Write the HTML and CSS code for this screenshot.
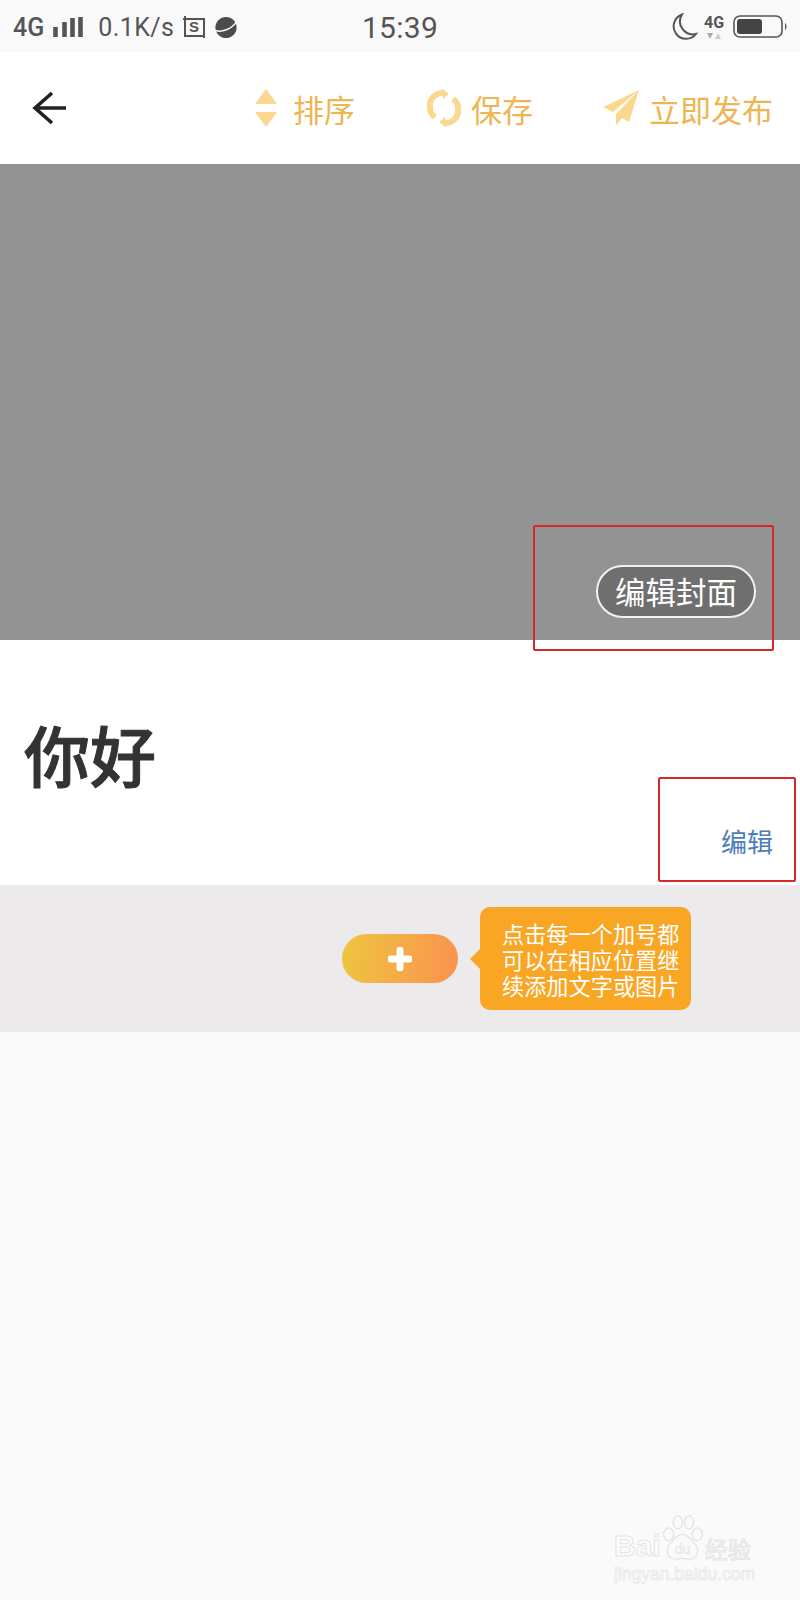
FILE: index.html
```html
<!DOCTYPE html>
<html lang="zh-CN">
<head>
    <meta charset="UTF-8">
    <meta name="viewport" content="width=device-width, initial-scale=1.0">
    <title>编辑</title>
    <link rel="stylesheet" href="styles.css">
</head>
<body>
    <div class="page">
        <div class="status">
            <div class="status-left">
                <span class="net">4G</span>
                <svg class="signal" width="30" height="20" viewBox="0 0 30 20"><path d="M2.5 10v10M11.5 5v15M19.5 1v19M27.5 0v20" stroke="#555" stroke-width="4.6" fill="none"/></svg>
                <span class="speed">0.1K/s</span>
                <svg class="s-icon" width="24" height="24" viewBox="0 0 24 24"><path d="M3 1v20h20M1 4h21v19" stroke="#555" stroke-width="2" fill="none"/><text x="12" y="17" class="s-letter">S</text></svg>
                <svg class="planet" width="24" height="23" viewBox="0 0 26 24"><circle cx="13" cy="12" r="11.5" fill="#4c4c4c"/><path d="M1 15C8 18 19 14 25 5" stroke="#f9f9f9" stroke-width="1.6" fill="none"/></svg>
            </div>
            <div class="time">15:39</div>
            <div class="status-right">
                <svg width="27" height="28" viewBox="0 0 27 28"><path d="M11 1.5A12.5 12.5 0 1 0 25 21 13 13 0 0 1 11 1.5Z" stroke="#555" stroke-width="2" fill="none"/></svg>
                <div class="net-small">
                    <span>4G</span>
                    <svg width="16" height="8" viewBox="0 0 16 8"><path d="M1 1h6L4 7Z" fill="#aaa"/><path d="M9 7h6L12 1Z" fill="#ccc"/></svg>
                </div>
                <svg width="54" height="24" viewBox="0 0 54 24"><rect x="1" y="1" width="48" height="21" rx="6" stroke="#555" stroke-width="1.6" fill="none"/><rect x="4" y="4" width="25" height="15" rx="3" fill="#444"/><path d="M52 8c2 1 2 6 0 7Z" fill="#555"/></svg>
            </div>
        </div>

        <div class="nav">
            <svg class="back" width="36" height="34" viewBox="0 0 36 34"><path d="M20 2 3 17l17 15M3 17h31" stroke="#222" stroke-width="3.6" fill="none"/></svg>
            <div class="actions">
                <div class="action action-sort">
                    <svg width="24" height="40" viewBox="0 0 24 40"><path d="M12 1 23 16H1ZM1 24h22L12 39Z" fill="#fbd88f"/></svg>
                    <span>排序</span>
                </div>
                <div class="action action-save">
                    <svg width="36" height="40" viewBox="0 0 36 40"><path d="M19 5C9 4 3 11 4 20c0 4 2 7 5 9M17 35c10 1 16-6 15-15 0-4-2-7-5-9" stroke="#fbd88f" stroke-width="6" fill="none"/><path d="M16 1l7 5-6 5ZM20 39l-7-5 6-5Z" fill="#fbd88f"/></svg>
                    <span>保存</span>
                </div>
                <div class="action action-publish">
                    <svg width="37" height="36" viewBox="0 0 37 36"><path d="M36 0 0 17l10 5ZM36 0 13 24v11l6-7 7 4Z" fill="#fbd88f"/></svg>
                    <span>立即发布</span>
                </div>
            </div>
        </div>

        <div class="cover">
            <div class="cover-btn">编辑封面</div>
        </div>

        <div class="title-box">
            <h1>你好</h1>
            <div class="edit">编辑</div>
        </div>

        <div class="add-row">
            <div class="add-btn">
                <svg width="24" height="24" viewBox="0 0 24 24"><path d="M12 3v18M3 12h18" stroke="#fff" stroke-width="7" stroke-linecap="round"/></svg>
            </div>
            <div class="tip">点击每一个加号都<br>可以在相应位置继<br>续添加文字或图片</div>
        </div>

        <div class="rest"></div>

        <div class="mark mark-cover"></div>
        <div class="mark mark-edit"></div>

        <div class="watermark">
            <div class="wm-top">
                <span class="wm-bai">Bai</span>
                <svg class="wm-paw" width="41" height="46" viewBox="0 0 44 50"><g fill="none" stroke="#e6e4e4" stroke-width="1.5"><ellipse cx="7" cy="21" rx="5.5" ry="7"/><ellipse cx="17" cy="8" rx="5" ry="7"/><ellipse cx="29" cy="8" rx="5" ry="7"/><ellipse cx="38" cy="21" rx="5.5" ry="7"/><path d="M22 21c7 0 10 7 14 11 5 6 2 16-6 16-3 0-5-1-8-1s-5 1-8 1c-8 0-11-10-6-16 4-4 7-11 14-11Z"/></g><text x="22" y="42" class="wm-du">du</text></svg>
                <span class="wm-cn">经验</span>
            </div>
            <div class="wm-url">jingyan.baidu.com</div>
        </div>
    </div>
</body>
</html>
```

FILE: styles.css
```css
*{
    margin: 0;
    padding: 0;
    box-sizing: border-box;
}
body{
    background-color: #fbfafa;
    font-family: "Noto Sans CJK SC", "Noto Sans", sans-serif;
}
.page{
    width: 800px;
    height: 1600px;
    position: relative;
    overflow: hidden;
    display: flex;
    flex-direction: column;
}

/* status bar */
.status{
    height: 52px;
    padding: 2px 13px 0;
    background-color: #f9f9f9;
    display: grid;
    grid-template-columns: 1fr auto 1fr;
    align-items: center;
    color: #555;
    font-family: Roboto, "Liberation Sans", sans-serif;
}
.status-left{
    display: flex;
    align-items: center;
}
.net{
    font-size: 25px;
    font-weight: 500;
    margin-right: 9px;
}
.speed{
    font-size: 25px;
    margin: 0 8px 0 15px;
    letter-spacing: 0.4px;
}
.s-icon{
    margin-right: 8px;
}
.s-letter{
    font-size: 15px;
    font-weight: 700;
    fill: #555;
    text-anchor: middle;
    font-family: "Liberation Sans", sans-serif;
}
.time{
    font-size: 30px;
    letter-spacing: 0.3px;
}
.status-right{
    display: flex;
    align-items: center;
    justify-content: flex-end;
}
.net-small{
    width: 24px;
    margin: 0 7px 0 4px;
    display: flex;
    flex-direction: column;
    align-items: center;
    font-size: 16px;
    font-weight: 700;
    line-height: 17px;
}
.net-small svg{
    display: block;
    margin-top: 1px;
}

/* top nav */
.nav{
    height: 112px;
    background-color: #fff;
    padding: 0 27px 0 32px;
    display: flex;
    align-items: center;
    justify-content: space-between;
}
.actions{
    display: flex;
    align-items: center;
    color: #eeb552;
    font-size: 31px;
}
.action{
    display: flex;
    align-items: center;
}
.action-sort{
    gap: 15px;
    margin-right: 71px;
}
.action-save{
    gap: 9px;
    margin-right: 70px;
}
.action-publish{
    gap: 9px;
}

/* cover */
.cover{
    height: 476px;
    background-color: #939393;
    display: flex;
    align-items: flex-end;
    justify-content: flex-end;
    padding: 0 44px 22px 0;
}
.cover-btn{
    width: 160px;
    height: 53px;
    border: 2px solid #f2f2f2;
    border-radius: 27px;
    background-color: #6f6f6f;
    color: #fff;
    font-size: 30.5px;
    line-height: 49px;
    text-align: center;
}

/* title */
.title-box{
    height: 245px;
    background-color: #fff;
    padding: 68px 27px 0 24px;
    display: flex;
    flex-direction: column;
}
.title-box h1{
    font-size: 66px;
    font-weight: 500;
    line-height: 90px;
    color: #333;
    -webkit-text-stroke: 1px #333;
}
.edit{
    margin-top: 24px;
    align-self: flex-end;
    font-size: 26px;
    line-height: 38px;
    color: #4a80b8;
}

/* add row */
.add-row{
    height: 147px;
    background-color: #edeaeb;
    padding: 22px 0 0 342px;
    display: flex;
    align-items: flex-start;
}
.add-btn{
    width: 116px;
    height: 49px;
    margin-top: 27px;
    border-radius: 25px;
    background: linear-gradient(100deg, #eec63f, #fb9150);
    display: flex;
    align-items: center;
    justify-content: center;
}
.tip{
    width: 211px;
    height: 103px;
    margin-left: 22px;
    padding: 13px 0 0 22px;
    background-color: #faa625;
    border-radius: 10px;
    color: #fff;
    font-size: 22.2px;
    line-height: 26px;
    position: relative;
}
.tip::before{
    content: "";
    position: absolute;
    left: -10px;
    top: 41px;
    border-top: 11px solid transparent;
    border-bottom: 11px solid transparent;
    border-right: 11px solid #faa625;
}
.rest{
    flex: 1;
    background-color: #fbfafa;
}

/* red marks drawn over the shot */
.mark{
    position: absolute;
    border: 2px solid #d6282b;
    border-radius: 2px;
}
.mark-cover{
    left: 533px;
    top: 525px;
    width: 241px;
    height: 126px;
}
.mark-edit{
    left: 658px;
    top: 777px;
    width: 138px;
    height: 105px;
}

/* watermark */
.watermark{
    position: absolute;
    left: 614px;
    top: 1515px;
    width: 150px;
    color: #fdfcfc;
    -webkit-text-stroke: 1px #e6e4e4;
    font-family: "Liberation Sans", sans-serif;
}
.wm-top{
    display: flex;
    align-items: flex-end;
    height: 46px;
}
.wm-bai{
    font-size: 30px;
    font-weight: 700;
    line-height: 30px;
}
.wm-paw{
    margin-left: 1px;
}
.wm-du{
    font-size: 15px;
    text-anchor: middle;
    font-weight: 400;
    fill: #fdfcfc;
    stroke: #e6e4e4;
    stroke-width: 0.7;
}
.wm-cn{
    font-family: "Noto Sans CJK SC", sans-serif;
    font-size: 23px;
    line-height: 26px;
    margin-left: 2px;
    white-space: nowrap;
}
.wm-url{
    font-size: 17.5px;
    line-height: 20px;
    margin-top: 3px;
    white-space: nowrap;
    -webkit-text-stroke-width: 0.7px;
}
```
